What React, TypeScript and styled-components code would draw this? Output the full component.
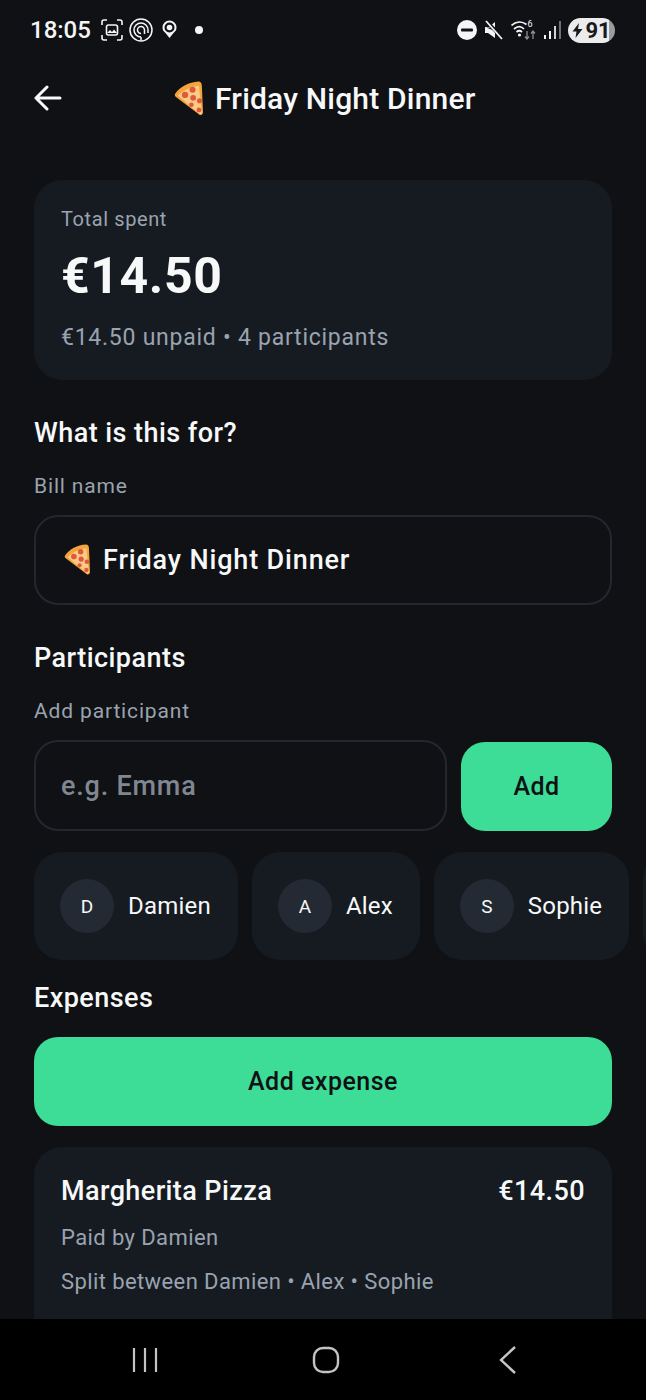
import React from "react";
import styled, { createGlobalStyle } from "styled-components";

const GlobalStyle = createGlobalStyle`
  html, body {
    margin: 0;
    padding: 0;
    background: #0f1115;
  }
  * {
    box-sizing: border-box;
  }
`;

const PizzaIcon = ({ size }: { size: number }) => (
  <svg width={size} height={size * 1.2} viewBox="0 0 25 30" style={{ flexShrink: 0 }}>
    <path d="M1 11 C5 5 13 1 21 0.5 C23 0.5 24 2 24 4 L25 27 C25 29 23 30 22 29 L2 14 C0.5 13 0.5 12 1 11 Z" fill="#f3a53b" />
    <path d="M3.5 12.5 C8 8 14 5 21.5 4 L24 28 C23 29 22.5 29 21.5 28 Z" fill="#fbcb85" />
    <circle cx="16" cy="7.5" r="2.6" fill="#e2583e" />
    <circle cx="9.5" cy="12" r="2.7" fill="#e2583e" />
    <circle cx="16.5" cy="14.5" r="2.5" fill="#e2583e" />
    <circle cx="22" cy="17" r="2.2" fill="#e2583e" />
    <circle cx="15" cy="20.5" r="2" fill="#e2583e" />
    <circle cx="21.5" cy="25" r="2.1" fill="#e2583e" />
  </svg>
);

const StatusLeftIcons = () => (
  <>
    <svg width="22" height="22" viewBox="0 0 22 22" fill="none" stroke="#f4f5f6" strokeWidth="1.6">
      <path d="M1 6V3a2 2 0 0 1 2-2h3M16 1h3a2 2 0 0 1 2 2v3M21 16v3a2 2 0 0 1-2 2h-3M6 21H3a2 2 0 0 1-2-2v-3" />
      <rect x="5.5" y="6" width="11" height="10" rx="2" />
      <path d="M6 14l3-3 2 2 2-2.5 3 3.5z" fill="#f4f5f6" stroke="none" />
    </svg>
    <svg width="24" height="24" viewBox="0 0 24 24" fill="none" stroke="#f4f5f6" strokeWidth="1.5">
      <circle cx="12" cy="12" r="11" />
      <path d="M12 22.5V19M12 19a7 7 0 1 1 7-7v3" />
      <path d="M15.5 16V12a3.5 3.5 0 1 0-3.5 3.5" />
    </svg>
    <PinIcon width="15" height="20" viewBox="0 0 15 20">
      <path fillRule="evenodd" fill="#f4f5f6" d="M7.5 0.5a7 7 0 0 1 7 7c0 2.5-1.2 4-3 5.5L7.5 18l-4-5c-1.8-1.5-3-3-3-5.5a7 7 0 0 1 7-7zM7.5 2.5a5 5 0 1 0 0 10a5 5 0 0 0 0-10z" />
      <circle cx="7.5" cy="7.5" r="2.8" fill="#f4f5f6" />
    </PinIcon>
    <StatusDot />
  </>
);

const StatusRightIcons = () => (
  <>
    <svg width="20" height="20" viewBox="0 0 20 20">
      <circle cx="10" cy="10" r="10" fill="#f4f5f6" />
      <rect x="4" y="8.5" width="12" height="3" rx="1" fill="#0f1115" />
    </svg>
    <svg width="20" height="20" viewBox="0 0 20 20">
      <path d="M1 7h4l6-5v5.5L2 7.5zM1 7v6h3l7 5v-7z" fill="#f4f5f6" />
      <path d="M3 1.5L18.5 18.5" stroke="#0f1115" strokeWidth="3.5" />
      <path d="M2 1L18 19" stroke="#f4f5f6" strokeWidth="1.8" />
    </svg>
    <svg width="26" height="22" viewBox="0 0 26 22" fill="none">
      <path d="M0.5 6.5C5 2 11 2 15.5 5.5M3 10c3.5-3 7-3 10 0M5.5 13c2-1.8 3.5-1.8 5.5 0" stroke="#f4f5f6" strokeWidth="1.7" />
      <circle cx="8.5" cy="16" r="1.6" fill="#f4f5f6" />
      <text x="16.5" y="8" fill="#f4f5f6" fontSize="9" fontFamily="Roboto, sans-serif">6</text>
      <path d="M16 12v8M14 17.5l2 2.5 2-2.5M22 20v-8M20 14.5l2-2.5 2 2.5" stroke="#8b8e93" strokeWidth="1.3" />
    </svg>
    <svg width="17" height="18" viewBox="0 0 17 18">
      <rect x="0" y="14" width="2" height="4" fill="#f4f5f6" />
      <rect x="5" y="10" width="2" height="8" fill="#f4f5f6" />
      <rect x="10" y="5" width="2" height="13" fill="#d0d2d4" />
      <rect x="15" y="0" width="2" height="18" fill="#6d7074" />
    </svg>
    <BatteryPill>
      <svg width="11" height="15" viewBox="0 0 11 15">
        <path d="M7 0L0.5 8.5h4L3.5 15l7-9h-4.5z" fill="#17191c" />
      </svg>
      91
    </BatteryPill>
  </>
);

const participants = ["Damien", "Alex", "Sophie"];

const App = () => {
  return (
    <Screen>
      <GlobalStyle />
      <StatusBar>
        <StatusGroup>
          <StatusTime>18:05</StatusTime>
          <StatusLeftIcons />
        </StatusGroup>
        <StatusGroupRight>
          <StatusRightIcons />
        </StatusGroupRight>
      </StatusBar>

      <Header>
        <BackButton>
          <svg width="28" height="26" viewBox="0 0 28 26" fill="none" stroke="#f7f8f8" strokeWidth="3" strokeLinecap="round" strokeLinejoin="round">
            <path d="M2 13h24M13 2L2 13l11 11" />
          </svg>
        </BackButton>
        <HeaderTitle>
          <PizzaIcon size={29} />
          Friday Night Dinner
        </HeaderTitle>
      </Header>

      <Content>
        <SummaryCard>
          <SummaryLabel>Total spent</SummaryLabel>
          <SummaryAmount>€14.50</SummaryAmount>
          <SummaryMeta>€14.50 unpaid • 4 participants</SummaryMeta>
        </SummaryCard>

        <SectionTitle>What is this for?</SectionTitle>
        <FieldLabel>Bill name</FieldLabel>
        <BillField>
          <PizzaIcon size={26} />
          Friday Night Dinner
        </BillField>

        <SectionTitle>Participants</SectionTitle>
        <FieldLabel>Add participant</FieldLabel>
        <AddRow>
          <NameInput placeholder="e.g. Emma" />
          <AddButton>Add</AddButton>
        </AddRow>

        <ChipRow>
          {participants.map((name) => (
            <Chip key={name}>
              <Avatar>{name[0]}</Avatar>
              <ChipName>{name}</ChipName>
            </Chip>
          ))}
          <Chip />
        </ChipRow>

        <ExpensesTitle>Expenses</ExpensesTitle>
        <AddExpenseButton>Add expense</AddExpenseButton>

        <ExpenseCard>
          <ExpenseTop>
            <ExpenseName>Margherita Pizza</ExpenseName>
            <ExpenseName>€14.50</ExpenseName>
          </ExpenseTop>
          <ExpensePaid>Paid by Damien</ExpensePaid>
          <ExpenseSplit>Split between Damien • Alex • Sophie</ExpenseSplit>
        </ExpenseCard>
      </Content>

      <NavBar>
        <svg width="28" height="28" viewBox="0 0 28 28" stroke="#c4c4c4" strokeWidth="2.2">
          <path d="M3 2v24M14 2v24M25 2v24" />
        </svg>
        <svg width="28" height="28" viewBox="0 0 28 28" fill="none" stroke="#c4c4c4" strokeWidth="2.4">
          <rect x="2" y="2" width="24" height="24" rx="9" />
        </svg>
        <svg width="25" height="30" viewBox="-5 0 25 30" fill="none" stroke="#c4c4c4" strokeWidth="2.4">
          <path d="M17 2L3 15l14 13" />
        </svg>
      </NavBar>
    </Screen>
  );
};

export default App;

const Screen = styled.div`
  width: 646px;
  height: 1400px;
  display: flex;
  flex-direction: column;
  overflow: hidden;
  background: #0f1115;
  color: #f7f8f8;
  font-family: Roboto, "Liberation Sans", sans-serif;
`;

const StatusBar = styled.div`
  height: 60px;
  flex-shrink: 0;
  display: flex;
  align-items: center;
  justify-content: space-between;
  padding: 0 31px 0 30px;
`;

const StatusGroup = styled.div`
  display: flex;
  align-items: center;
  gap: 6px;
`;

const StatusGroupRight = styled(StatusGroup)`
  gap: 7px;
`;

const StatusTime = styled.span`
  font-size: 24px;
  font-weight: 500;
  margin-right: 4px;
  color: #f4f5f6;
`;

const PinIcon = styled.svg`
  margin-left: 3px;
`;

const StatusDot = styled.span`
  width: 8px;
  height: 8px;
  margin-left: 12px;
  border-radius: 50%;
  background: #f4f5f6;
`;

const BatteryPill = styled.span`
  display: flex;
  align-items: center;
  justify-content: center;
  gap: 2px;
  width: 47px;
  height: 25px;
  border-radius: 13px;
  background: linear-gradient(90deg, #ececec 88%, #9b9b9b 88%);
  color: #17191c;
  font-size: 22px;
  font-weight: 700;
`;

const Header = styled.div`
  height: 76px;
  flex-shrink: 0;
  display: flex;
  align-items: center;
  padding: 0 34px;
`;

const BackButton = styled.div`
  display: flex;
  width: 30px;
`;

const HeaderTitle = styled.div`
  display: flex;
  align-items: center;
  gap: 12px;
  margin-left: 110px;
  font-size: 30px;
  font-weight: 500;
  letter-spacing: 0.2px;
`;

const Content = styled.div`
  flex: 1;
  min-height: 0;
  overflow: hidden;
  padding: 44px 34px 0;
`;

const SummaryCard = styled.div`
  height: 200px;
  padding: 27px;
  border-radius: 28px;
  background: #161b22;
`;

const SummaryLabel = styled.div`
  font-size: 20px;
  line-height: 24px;
  letter-spacing: 0.6px;
  color: #9aa3af;
`;

const SummaryAmount = styled.div`
  margin-top: 15px;
  font-size: 50px;
  line-height: 60px;
  font-weight: 700;
  letter-spacing: 0.6px;
`;

const SummaryMeta = styled.div`
  margin-top: 18px;
  font-size: 23px;
  line-height: 28px;
  letter-spacing: 0.75px;
  color: #9aa3af;
`;

const SectionTitle = styled.div`
  margin-top: 37px;
  font-size: 27px;
  line-height: 32px;
  font-weight: 500;
  letter-spacing: 0.45px;
`;

const ExpensesTitle = styled(SectionTitle)`
  margin-top: 22px;
`;

const FieldLabel = styled.div`
  margin-top: 24px;
  font-size: 21px;
  line-height: 26px;
  letter-spacing: 0.85px;
  color: #9aa3af;
`;

const BillField = styled.div`
  margin-top: 16px;
  height: 90px;
  display: flex;
  align-items: center;
  gap: 13px;
  padding: 0 28px;
  border: 2px solid #23272e;
  border-radius: 24px;
  font-size: 27px;
  font-weight: 500;
  letter-spacing: 0.85px;
`;

const AddRow = styled.div`
  margin-top: 16px;
  display: flex;
  align-items: flex-end;
  gap: 14px;
`;

const NameInput = styled.input`
  flex: 1;
  min-width: 0;
  height: 91px;
  padding: 0 25px;
  border: 2px solid #23272e;
  border-radius: 24px;
  outline: none;
  background: transparent;
  color: #f7f8f8;
  font-family: inherit;
  font-size: 27px;
  font-weight: 500;
  letter-spacing: 0.8px;

  &::placeholder {
    color: #808791;
    opacity: 1;
  }
`;

const AddButton = styled.button`
  width: 151px;
  height: 89px;
  border: none;
  border-radius: 24px;
  background: #3ddc97;
  color: #0f1115;
  font-family: inherit;
  font-size: 25px;
  font-weight: 500;
  letter-spacing: 0.4px;
`;

const ChipRow = styled.div`
  margin-top: 21px;
  margin-right: -34px;
  display: flex;
  gap: 14px;
`;

const Chip = styled.div`
  flex-shrink: 0;
  min-width: 60px;
  height: 108px;
  display: flex;
  align-items: center;
  gap: 14px;
  padding: 0 27px 0 26px;
  border-radius: 28px;
  background: #161b22;
`;

const Avatar = styled.div`
  width: 54px;
  height: 54px;
  flex-shrink: 0;
  display: flex;
  align-items: center;
  justify-content: center;
  border-radius: 50%;
  background: #242a33;
  font-size: 19px;
  font-weight: 400;
`;

const ChipName = styled.div`
  font-size: 24px;
  font-weight: 400;
  letter-spacing: 0.2px;
`;

const AddExpenseButton = styled.button`
  display: block;
  width: 100%;
  margin-top: 23px;
  height: 89px;
  border: none;
  border-radius: 24px;
  background: #3ddc97;
  color: #0f1115;
  font-family: inherit;
  font-size: 25px;
  font-weight: 500;
  letter-spacing: 0.5px;
`;

const ExpenseCard = styled.div`
  margin-top: 21px;
  height: 240px;
  padding: 27px;
  border-radius: 28px;
  background: #161b22;
`;

const ExpenseTop = styled.div`
  display: flex;
  justify-content: space-between;
`;

const ExpenseName = styled.div`
  font-size: 27px;
  line-height: 34px;
  font-weight: 500;
  letter-spacing: 0.4px;
`;

const ExpensePaid = styled.div`
  margin-top: 16px;
  font-size: 22px;
  line-height: 28px;
  letter-spacing: 0.4px;
  color: #9aa3af;
`;

const ExpenseSplit = styled(ExpensePaid)`
  margin-top: 16px;
`;

const NavBar = styled.div`
  height: 81px;
  flex-shrink: 0;
  display: flex;
  align-items: center;
  gap: 153px;
  padding: 0 0 0 131px;
  background: #000;
`;
